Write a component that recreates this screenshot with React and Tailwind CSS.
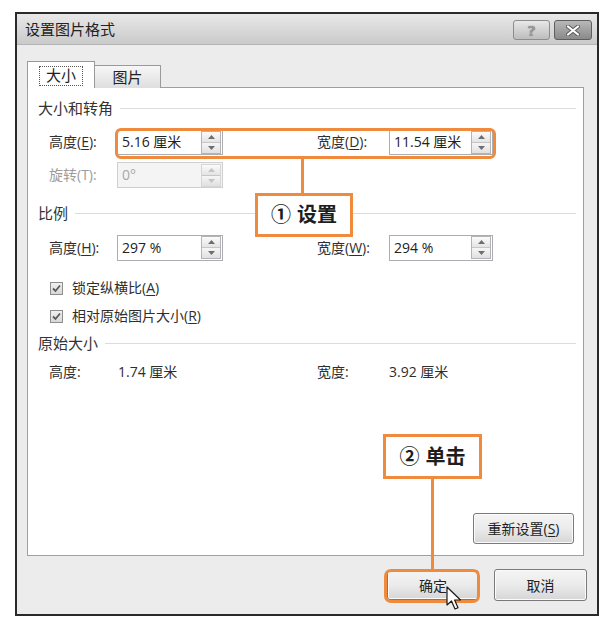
import React from "react";

const FONT = "font-['Open_Sans','Noto_Sans_CJK_SC',sans-serif]";

function Spinner({ disabled }) {
  const c = disabled ? "#c4c4c4" : "#6e6e6e";
  return (
    <div
      className={`flex flex-col w-[20px] h-[23px] mr-[1px] border ${
        disabled ? "border-[#d6d6d6]" : "border-[#b4b4b4]"
      }`}
    >
      <div className="flex-1 flex items-center justify-center bg-linear-to-b from-[#fbfbfb] to-[#e4e4e4] border-b border-[#c6c6c6]">
        <svg width="7" height="4" viewBox="0 0 7 4">
          <path d="M0 4 L3.5 0 L7 4Z" fill={c} />
        </svg>
      </div>
      <div className="flex-1 flex items-center justify-center bg-linear-to-b from-[#f6f6f6] to-[#e0e0e0]">
        <svg width="7" height="4" viewBox="0 0 7 4">
          <path d="M0 0 L3.5 4 L7 0Z" fill={c} />
        </svg>
      </div>
    </div>
  );
}

function Input({ value, w, disabled }) {
  return (
    <div
      className={`${w} h-[26px] border flex items-center justify-between pl-[4px] ${
        disabled
          ? "border-[#cfcfcf] bg-[#f4f4f4] text-[#a8a8a8]"
          : "border-[#abadb3] bg-white text-[#222]"
      }`}
    >
      <span className="text-[14px] leading-none whitespace-nowrap">{value}</span>
      <Spinner disabled={disabled} />
    </div>
  );
}

function Header({ children }) {
  return (
    <div className="flex items-center h-[20px] pl-[10px] pr-[7px] gap-[7px]">
      <span className="text-[15px] text-[#333] leading-none whitespace-nowrap">{children}</span>
      <div className="flex-1 h-px bg-[#dcdcdc]" />
    </div>
  );
}

function Label({ pre, u, post, w, disabled }) {
  return (
    <span
      className={`${w} text-[14px] leading-none whitespace-nowrap ${
        disabled ? "text-[#9c9c9c]" : "text-[#2e2e2e]"
      }`}
    >
      {pre}
      {u ? <span className="underline underline-offset-2">{u}</span> : null}
      {post}
    </span>
  );
}

function Check({ pre, u, post }) {
  return (
    <div className="flex items-center h-[20px] pl-[22px] gap-[9px]">
      <div className="w-[13px] h-[13px] border border-[#8e8e8e] bg-linear-to-b from-[#f0f0f0] to-[#d8d8d8] flex items-center justify-center">
        <svg width="9" height="9" viewBox="0 0 9 9">
          <path d="M1 4.5 L3.5 7 L8 1.5" stroke="#5a5a5a" strokeWidth="1.8" fill="none" />
        </svg>
      </div>
      <span className="text-[14px] text-[#2e2e2e] leading-none whitespace-nowrap">
        {pre}
        <span className="underline underline-offset-2">{u}</span>
        {post}
      </span>
    </div>
  );
}

function Btn({ children, w, h = "h-[31px]" }) {
  return (
    <div
      className={`${w} ${h} rounded-[3px] border border-[#7a7a7a] bg-linear-to-b from-[#f4f4f4] via-[#ebebeb] to-[#d6d6d6] flex items-center justify-center text-[14px] text-[#222] shadow-[inset_0_0_0_1px_#fbfbfb]`}
    >
      {children}
    </div>
  );
}

export default function App() {
  return (
    <div className={`relative w-[615px] h-[632px] bg-white overflow-hidden pt-[12px] pl-[15px] ${FONT}`}>
      {/* Dialog */}
      <div className="w-[584px] h-[604px] border-2 border-[#2a2a2a] bg-[#ececec] flex flex-col">
        {/* Title bar */}
        <div className="h-[31px] flex items-center justify-between pl-[8px] pr-[5px] bg-linear-to-b from-[#e8e8e8] to-[#cacaca] border-b border-[#b4b4b4]">
          <span className="text-[15px] text-[#222] leading-none">设置图片格式</span>
          <div className="flex items-center gap-[4px] mt-[2px]">
            <div className="w-[37px] h-[20px] rounded-[3px] border border-[#8c8c8c] bg-linear-to-b from-[#e8e8e8] to-[#bdbdbd] flex items-center justify-center">
              <span className="text-[15px] font-bold text-[#9a9a9a] leading-none [text-shadow:0_0_1px_#555]">?</span>
            </div>
            <div className="w-[38px] h-[20px] rounded-[3px] border border-[#5e5e5e] bg-linear-to-b from-[#b8b8b8] to-[#8a8a8a] flex items-center justify-center">
              <svg width="14" height="11" viewBox="0 0 14 11">
                <path d="M2 1.5 L12 9.5 M12 1.5 L2 9.5" stroke="#5a5a5a" strokeWidth="4" strokeLinecap="round" />
                <path d="M2 1.5 L12 9.5 M12 1.5 L2 9.5" stroke="#ffffff" strokeWidth="2.2" strokeLinecap="round" />
              </svg>
            </div>
          </div>
        </div>

        {/* Body */}
        <div className="flex-1 flex flex-col">
          {/* Tabs */}
          <div className="flex items-end mt-[16px] ml-[10px] h-[27px] relative z-10">
            <div className="w-[68px] h-[27px] bg-white border border-b-0 border-[#9a9a9a] flex items-center justify-center pt-[1px]">
              <div className="border border-dotted border-[#555] px-[6px] h-[20px] flex items-center text-[15px] text-[#222] leading-none">
                大小
              </div>
            </div>
            <div className="w-[66px] h-[23px] border border-l-0 border-b-0 border-[#9a9a9a] bg-linear-to-b from-[#f7f7f7] to-[#dedede] flex items-center justify-center text-[15px] text-[#222] leading-none">
              图片
            </div>
          </div>

          {/* Panel */}
          <div className="relative ml-[10px] -mt-px w-[557px] h-[469px] bg-white border border-[#9f9f9f] flex flex-col">
            <div className="mt-[10px]">
              <Header>大小和转角</Header>
            </div>
            <div className="flex items-center h-[26px] mt-[11px] pl-[21px]">
              <Label w="w-[68px]" pre="高度(" u="E" post="):" />
              <Input w="w-[106px]" value="5.16 厘米" />
              <div className="w-[94px]" />
              <Label w="w-[72px]" pre="宽度(" u="D" post="):" />
              <Input w="w-[104px]" value="11.54 厘米" />
            </div>
            <div className="flex items-center h-[26px] mt-[7px] pl-[21px]">
              <Label w="w-[68px]" pre="旋转(T):" disabled />
              <Input w="w-[106px]" value="0°" disabled />
            </div>
            <div className="mt-[15px]">
              <Header>比例</Header>
            </div>
            <div className="flex items-center h-[27px] mt-[11px] pl-[21px]">
              <Label w="w-[68px]" pre="高度(" u="H" post="):" />
              <Input w="w-[106px]" value="297 %" />
              <div className="w-[94px]" />
              <Label w="w-[72px]" pre="宽度(" u="W" post="):" />
              <Input w="w-[104px]" value="294 %" />
            </div>
            <div className="mt-[17px]">
              <Check pre="锁定纵横比(" u="A" post=")" />
            </div>
            <div className="mt-[8px]">
              <Check pre="相对原始图片大小(" u="R" post=")" />
            </div>
            <div className="mt-[7px]">
              <Header>原始大小</Header>
            </div>
            <div className="flex items-center h-[20px] mt-[9px] pl-[21px] text-[14px] text-[#2e2e2e] leading-none">
              <span className="w-[69px]">高度:</span>
              <span className="w-[105px]">1.74 厘米</span>
              <div className="w-[94px]" />
              <span className="w-[72px]">宽度:</span>
              <span>3.92 厘米</span>
            </div>

            <div className="mt-auto self-end mr-[9px] mb-[11px]">
              <Btn w="w-[101px]">
                重新设置(<span className="underline underline-offset-2">S</span>)
              </Btn>
            </div>
          </div>

          {/* Bottom buttons */}
          <div className="flex justify-end items-center gap-[15px] pr-[10px] mt-[13px]">
            <Btn w="w-[92px]" h="h-[30px]">确定</Btn>
            <Btn w="w-[93px]" h="h-[32px]">取消</Btn>
          </div>
        </div>
      </div>

      {/* Annotation overlays */}
      <div className="absolute left-[115px] top-[128px] w-[381px] h-[31px] border-[3px] border-[#f08a3c] rounded-[6px]" />
      <div className="absolute left-[301px] top-[158px] w-[3px] h-[36px] bg-[#f08a3c]" />
      <div className="absolute left-[255px] top-[193px] w-[98px] h-[44px] bg-white border-[3px] border-[#f08a3c] flex items-center justify-center gap-[6px] text-[20px] text-[#1e1e1e] font-semibold leading-none">
        <span>①</span>
        <span>设置</span>
      </div>

      <div className="absolute left-[383px] top-[434px] w-[99px] h-[45px] bg-white border-[3px] border-[#f08a3c] flex items-center justify-center gap-[6px] text-[20px] text-[#1e1e1e] font-semibold leading-none">
        <span>②</span>
        <span>单击</span>
      </div>
      <div className="absolute left-[431px] top-[478px] w-[3px] h-[92px] bg-[#f08a3c]" />
      <div className="absolute left-[384px] top-[569px] w-[96px] h-[34px] border-[3px] border-[#f08a3c] rounded-[7px]" />

      {/* Cursor */}
      <svg className="absolute left-[446px] top-[586px]" width="17" height="26" viewBox="0 0 17 26">
        <path
          d="M1 1 L1 19 L5.5 15 L9 23 L12 21.7 L8.6 14 L14.5 14 Z"
          fill="#ffffff"
          stroke="#1a1a1a"
          strokeWidth="1.2"
          strokeLinejoin="round"
        />
      </svg>
    </div>
  );
}
